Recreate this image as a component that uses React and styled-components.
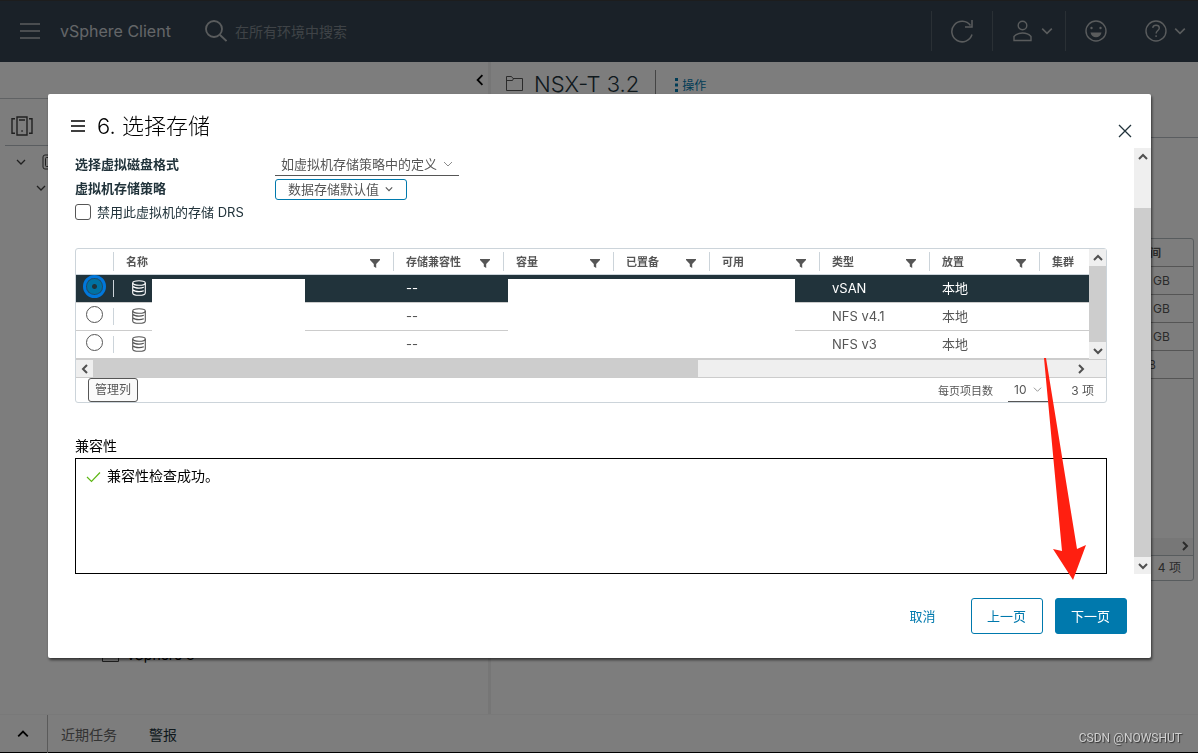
import React, { useState } from "react";
import styled, { createGlobalStyle } from "styled-components";

const sans = `Inter, "Noto Sans CJK SC", sans-serif`;

const GlobalStyle = createGlobalStyle`
  *, *::before, *::after {
    box-sizing: border-box;
  }

  body {
    margin: 0;
    font-family: ${sans};
    font-size: 13px;
    color: #565656;
    background: #fafafa;
  }

  button, input, select {
    margin: 0;
    font-family: inherit;
    color: inherit;
  }
`;

/* ---------- icons ---------- */

const Icon = styled.svg`
  flex: none;
  display: block;
  fill: none;
  stroke: currentColor;
  stroke-width: ${({ $stroke }) => $stroke || 1};
`;

const Chevron = ({ size = 10, stroke = 1.2, dir = "down" }) => {
  const turn = { down: 0, left: 90, up: 180, right: 270 }[dir];
  return (
    <Icon width={size} height={size} viewBox="0 0 10 10" $stroke={stroke}>
      <path d="M1 3l4 4 4-4" transform={`rotate(${turn} 5 5)`} />
    </Icon>
  );
};

const MenuIcon = ({ width, height, stroke }) => (
  <Icon width={width} height={height} viewBox={`0 0 ${width} ${height}`} $stroke={stroke}>
    <path d={`M0 1h${width}M0 ${height / 2}h${width}M0 ${height - 1}h${width}`} />
  </Icon>
);

const FolderIcon = () => (
  <Icon width="17" height="15" viewBox="0 0 17 15">
    <path d="M.5 14.5V.5h5l1.500 2h9.500v12zM.5 4.500h6l1-2" />
  </Icon>
);

const DatabaseIcon = () => (
  <Icon width="14" height="16" viewBox="0 0 14 16" $stroke={1.1}>
    <ellipse cx="7" cy="3" rx="6.300" ry="2.300" />
    <path d="M.7 3v10c0 1.300 2.800 2.300 6.300 2.300s6.300-1 6.300-2.300V3M1 6.500c1 1 3.200 1.600 6 1.600 1.900 0 3.600-.3 4.800-.8M1 10c1 1 3.200 1.600 6 1.600 1.900 0 3.600-.3 4.800-.8" />
  </Icon>
);

const FilterIcon = () => (
  <Icon width="10" height="9" viewBox="0 0 10 9">
    <path d="M0 0h10v1L6.200 5v4L3.800 7.600V5L0 1z" fill="currentColor" stroke="none" />
  </Icon>
);

/* ---------- application behind the dialog ---------- */

const Page = styled.div`
  display: flex;
  flex-direction: column;
  height: 100vh;
  overflow: hidden;
`;

const TopBar = styled.header`
  display: flex;
  align-items: center;
  height: 62px;
  padding-left: 20px;
  color: #b4b8bb;
  background: #344350;
  box-shadow: inset 0 1px #3a3a3a;
`;

const PlainButton = styled.button`
  display: flex;
  align-items: center;
  justify-content: center;
  gap: ${({ $gap }) => $gap || 0}px;
  padding: 0;
  border: 0;
  background: none;
  cursor: pointer;
`;

const Brand = styled.span`
  margin: 0 34px 0 20px;
  font-size: 16px;
  line-height: 24px;
  color: #c8ccd0;
`;

const Search = styled.label`
  display: flex;
  flex: 1;
  align-items: center;
  gap: 8px;
`;

const SearchInput = styled.input`
  flex: 1;
  border: 0;
  outline: 0;
  padding: 0;
  font-size: 14px;
  background: none;

  &::placeholder {
    color: #7f878e;
    opacity: 1;
  }
`;

const BarItem = styled.div`
  display: flex;
  justify-content: center;
  align-items: center;
  width: ${({ $width }) => $width}px;
  height: 40px;
  padding-left: ${({ $inset }) => $inset || 0}px;
  border-left: 1px solid ${({ $line }) => ($line ? "#54606b" : "transparent")};
`;

const Workspace = styled.div`
  display: flex;
  flex: 1;
  min-height: 0;
`;

const Navigator = styled.aside`
  display: flex;
  flex-direction: column;
  width: 488px;
  color: #404040;
`;

const NavTop = styled.div`
  display: flex;
  justify-content: flex-end;
  align-items: center;
  height: 37px;
  padding-right: 2px;
  border-bottom: 1px solid #c0c4c8;
  color: #000;
`;

const NavTabs = styled.div`
  display: flex;
  align-items: center;
  height: 47px;
  margin-left: 5px;
  padding: 8px 6px 0;
  border-bottom: 1px solid #b4bac0;
`;

const TreeRow = styled.div`
  display: flex;
  align-items: center;
  height: 26px;
  margin-top: ${({ $last }) => ($last ? "auto" : 0)};
  margin-bottom: ${({ $last }) => ($last ? 50 : 0)}px;
  padding: 6px 0 0 ${({ $indent }) => $indent}px;
  font-size: 14px;
`;

const TreeToggle = styled.span`
  width: 26px;
`;

const TreeLabel = styled.span`
  padding-left: 8px;
  color: #000;
`;

const Splitter = styled.div`
  width: 3px;
  background: #ececec;
`;

const Main = styled.main`
  flex: 1;
  min-width: 0;
`;

const ObjectHeader = styled.div`
  display: flex;
  align-items: center;
  height: 76px;
  padding: 0 0 32px 15px;
  border-bottom: 1px solid #b4bac0;
`;

const ObjectTitle = styled.h1`
  margin: 0 16px 0 11px;
  font-size: 22px;
  font-weight: 300;
  line-height: 28px;
  color: #21333b;
`;

const Actions = styled.button`
  display: flex;
  align-items: center;
  gap: 4px;
  height: 28px;
  padding: 2px 0 0 19px;
  border: 0;
  border-left: 1px solid #888;
  font-size: 12px;
  color: #0079ad;
  background: none;
`;

const BackGrid = styled.div`
  margin: 100px 4px 0 24px;
  border: 1px solid #b0b8bc;
  border-radius: 3px;
`;

const BackTable = styled.table`
  width: 100%;
  border-collapse: collapse;

  th,
  td {
    height: 28px;
    padding: 0;
    border-bottom: 1px solid #aaa;
    text-align: left;
    font-size: 12px;
  }

  th {
    height: 27px;
    font-size: 11px;
  }
`;

const EdgeCell = styled.td`
  width: 54px;
`;

const EdgeText = styled.span`
  padding-left: ${({ $shift }) => ($shift ? 0 : 14)}px;
`;

const BackScroll = styled.div`
  display: flex;
  justify-content: flex-end;
  align-items: center;
  height: 18px;
  margin-top: 159px;
  padding-right: 3px;
  border-bottom: 1px solid #b0b8bc;
  background: #efefef;
`;

const BackFooter = styled.div`
  height: 24px;
  padding-right: 12px;
  font-size: 12px;
  line-height: 24px;
  text-align: right;
`;

const TaskBar = styled.footer`
  display: flex;
  align-items: center;
  height: 39px;
  border-top: 1px solid #f2f2f2;
  border-bottom: 1px solid #000;
  font-size: 14px;
`;

const TaskToggle = styled(PlainButton)`
  width: 48px;
  height: 38px;
  padding-right: 2px;
  border-right: 1px solid #b4b4b4;
  color: #000;
`;

const TaskTab = styled(PlainButton)`
  margin-left: ${({ $active }) => ($active ? 13 : 32)}px;
  font-size: 14px;
  color: ${({ $active }) => ($active ? "#666" : "#21333b")};
`;

const Watermark = styled.span`
  position: fixed;
  right: 16px;
  bottom: 7px;
  font-family: Roboto, "Liberation Sans", sans-serif;
  font-size: 12px;
  line-height: 16px;
  color: #d0d0d0;
  text-shadow: 1px 1px 1px #333;
`;

/* ---------- dialog ---------- */

const Backdrop = styled.div`
  position: fixed;
  inset: 0;
  display: flex;
  padding: 94px 47px 95px 48px;
  background: rgba(0, 0, 0, 0.5);
`;

const Dialog = styled.section`
  position: relative;
  display: flex;
  flex: 1;
  flex-direction: column;
  min-width: 0;
  border-radius: 2px;
  background: #fff;
  box-shadow: 1px 2px 3px rgba(0, 0, 0, 0.6);
`;

const DialogHeader = styled.header`
  display: flex;
  align-items: center;
  gap: 12px;
  height: 54px;
  padding: 10px 19px 0 23px;
  color: #000;
`;

const DialogTitle = styled.h2`
  flex: 1;
  margin: 0;
  font-size: 22px;
  font-weight: 300;
  line-height: 30px;
`;

const CloseButton = styled(PlainButton)`
  padding-top: 10px;
  color: #21333b;
`;

const DialogBody = styled.div`
  display: flex;
  flex: 1;
  min-height: 0;
`;

const Content = styled.div`
  display: flex;
  flex: 1;
  flex-direction: column;
  min-width: 0;
  padding: 4px 27px 0;
`;

const FormRow = styled.div`
  display: flex;
  align-items: center;
  height: 24px;
  color: #21333b;

  label {
    padding-bottom: 2px;
  }
`;

const FormLabel = styled.label`
  width: 200px;
  font-weight: 700;
`;

const SelectBox = styled.span`
  display: grid;
  align-items: center;
  width: ${({ $width }) => $width}px;
  height: 24px;
  border-bottom: 1px solid #565656;
  color: #8c8c8c;

  > * {
    grid-area: 1 / 1;
  }

  > svg {
    justify-self: end;
    margin-right: 6px;
    pointer-events: none;
  }
`;

const Select = styled.select`
  width: 100%;
  height: 23px;
  padding: 0 16px 0 6px;
  border: 0;
  outline: 0;
  appearance: none;
  font-size: ${({ $small }) => ($small ? 12 : 13)}px;
  color: #565656;
  background: none;
`;

const PolicyButton = styled.button`
  display: flex;
  align-items: center;
  justify-content: space-between;
  width: 132px;
  height: 21px;
  margin-top: 3px;
  padding: 0 13px 2px 12px;
  border: 1px solid #0079ad;
  border-radius: 3px;
  font-size: 13px;
  line-height: 18px;
  color: #565656;
  background: #fff;
`;

const Checkbox = styled.input`
  width: 16px;
  height: 16px;
  margin-right: 6px;
  border: 1px solid #565656;
  border-radius: 3px;
  appearance: none;
  background: #fff;
`;

const DataGrid = styled.div`
  margin-top: 24px;
  border: 1px solid #ccd4da;
  border-radius: 3px;
`;

const GridView = styled.div`
  position: relative;
  display: flex;
`;

const Table = styled.table`
  flex: 1;
  width: 100%;
  table-layout: fixed;
  border-collapse: separate;
  border-spacing: 0;
`;

const HeadCell = styled.th`
  width: ${({ $width }) => ($width ? `${$width}px` : "auto")};
  height: 26px;
  padding: 0;
  border-bottom: 1px solid #ccd4da;
  font-size: 11px;
  font-weight: 700;
  line-height: 16px;
`;

const HeadInner = styled.div`
  display: flex;
  align-items: center;
  justify-content: space-between;
  height: 19px;
  padding: 0 13px 0 12px;
  border-left: 1px solid #ccd4da;
  white-space: nowrap;

  svg {
    margin-top: 3px;
  }
`;

const Row = styled.tr`
  color: ${({ $selected }) => ($selected ? "#fff" : "#565656")};
  background: ${({ $selected }) => ($selected ? "#21333b" : "#fff")};
`;

const Cell = styled.td`
  height: 28px;
  padding: 0 0 2px 13px;
  border-bottom: 1px solid #ccc;
  font-size: 13px;
  line-height: 20px;
`;

const RadioCell = styled(Cell)`
  padding: 3px 0 0 10px;
  vertical-align: top;
`;

const NameCell = styled(Cell)`
  padding: 0 0 1px;
`;

const NameInner = styled.div`
  display: flex;
  align-items: center;
  height: 17px;
  padding-left: 18px;
  border-left: 1px solid #ccd4da;
`;

const Radio = styled.input`
  display: block;
  width: 17px;
  height: 17px;
  border: 1px solid #565656;
  border-radius: 50%;
  appearance: none;
  background: #fff;

  &:checked {
    border-color: #21506c;
    background: radial-gradient(circle, #21333b 2px, #0072a3 3px);
    outline: 3px solid #0077db;
  }
`;

const Mask = styled.span`
  position: absolute;
  top: 30px;
  bottom: 1px;
  left: ${({ $left }) => $left}px;
  width: ${({ $width }) => $width}px;
  background: #fff;
`;

const ScrollTrack = styled.div`
  display: flex;
  flex-direction: ${({ $horizontal }) => ($horizontal ? "row" : "column")};
  ${({ $horizontal }) => ($horizontal ? "padding-right: 17px;" : "width: 17px;")}
  ${({ $horizontal }) => $horizontal && "border: solid #ccc; border-width: 1px 0;"}
  color: #505050;
  background: #efefef;
`;

const ScrollArrow = styled.span`
  display: flex;
  flex: none;
  align-items: center;
  justify-content: center;
  width: 17px;
  height: 17px;
`;

const ScrollSpace = styled.span`
  flex: ${({ $grow }) => $grow} 0 0;
`;

const ScrollThumb = styled(ScrollSpace)`
  background: #cdcdcd;
`;

const GridFooter = styled.div`
  display: flex;
  align-items: center;
  height: 24px;
  padding: 0 12px;
  font-size: 11px;
`;

const ColumnsButton = styled.button`
  height: 24px;
  margin-right: auto;
  padding: 0 6px;
  border: 1px solid #565656;
  border-radius: 3px;
  font-size: 12px;
  line-height: 22px;
  background: #fafafa;
`;

const PageSizeLabel = styled.label`
  margin-right: 15px;
`;

const ItemCount = styled.span`
  width: 46px;
  padding-bottom: 2px;
  font-size: 12px;
  text-align: right;
`;

const SectionTitle = styled.h3`
  margin: 33px 0 2px;
  font-size: 14px;
  font-weight: 400;
  line-height: 20px;
  color: #000;
`;

const ResultBox = styled.div`
  display: flex;
  flex: 1;
  align-items: flex-start;
  gap: 6px;
  padding: 7px 10px;
  border: 1px solid #000;
  font-size: 14px;
  line-height: 20px;
  color: #000;

  svg {
    margin-top: 5px;
    color: #5eb715;
  }
`;

const DialogFooter = styled.footer`
  display: flex;
  justify-content: flex-end;
  gap: 12px;
  padding: 24px 24px 24px 0;
`;

const Button = styled.button`
  width: 72px;
  height: 36px;
  padding: 0 1px 2px 0;
  border: 1px solid ${({ $kind }) => ($kind === "link" ? "transparent" : "#0079ad")};
  border-radius: 3px;
  font-size: 13px;
  color: ${({ $kind }) => ($kind === "primary" ? "#fff" : "#0079ad")};
  background: ${({ $kind }) => ($kind === "primary" ? "#0079ad" : "#fff")};
`;

const Pointer = styled.svg`
  position: absolute;
  right: 65px;
  bottom: 78px;
  pointer-events: none;
`;

const COLUMNS = [
  { title: "名称", filter: true },
  { title: "存储兼容性", width: 110, filter: true },
  { title: "容量", width: 110, filter: true },
  { title: "已置备", width: 96, filter: true },
  { title: "可用", width: 110, filter: true },
  { title: "类型", width: 110, filter: true },
  { title: "放置", width: 110, filter: true },
  { title: "集群", width: 50 },
];

const DATASTORES = [
  { type: "vSAN", placement: "本地" },
  { type: "NFS v4.1", placement: "本地" },
  { type: "NFS v3", placement: "本地" },
];

const Background = () => (
  <Page>
    <TopBar>
      <PlainButton aria-label="菜单">
        <MenuIcon width={20} height={16} stroke={1.4} />
      </PlainButton>
      <Brand>vSphere Client</Brand>
      <Search>
        <Icon width="22" height="22" viewBox="0 0 22 22" $stroke={1.8}>
          <circle cx="9" cy="9" r="8" />
          <path d="M15 15l6.500 6" />
        </Icon>
        <SearchInput aria-label="搜索" placeholder="在所有环境中搜索" />
      </Search>
      <BarItem $width={61} $line>
        <PlainButton aria-label="刷新">
          <Icon width="24" height="24" viewBox="0 0 24 24" $stroke={1.5}>
            <path d="M22 15.500A10.300 10.300 0 1 1 20.500 6.500M22 1v7h-7" />
          </Icon>
        </PlainButton>
      </BarItem>
      <BarItem $width={73} $inset={8} $line>
        <PlainButton aria-label="用户" $gap={9}>
          <Icon width="19" height="22" viewBox="0 0 19 22" $stroke={1.4}>
            <circle cx="9.500" cy="5.500" r="4.300" />
            <path d="M1 20.500v-4c2-2.300 5-3.500 8.500-3.500s6.500 1.200 8.500 3.500v4z" />
          </Icon>
          <Chevron size={12} stroke={1.3} />
        </PlainButton>
      </BarItem>
      <BarItem $width={61} $line>
        <PlainButton aria-label="反馈">
          <Icon width="22" height="22" viewBox="0 0 22 22" $stroke={1.4}>
            <circle cx="11" cy="11" r="10" />
            <circle cx="6.500" cy="8" r="1.200" fill="currentColor" stroke="none" />
            <circle cx="15.500" cy="8" r="1.200" fill="currentColor" stroke="none" />
            <path d="M5.500 12.500h11c-.5 3-2.800 4.800-5.500 4.800s-5-1.800-5.500-4.800z" fill="currentColor" stroke="none" />
          </Icon>
        </PlainButton>
      </BarItem>
      <BarItem $width={72} $inset={6}>
        <PlainButton aria-label="帮助" $gap={7}>
          <Icon width="22" height="22" viewBox="0 0 22 22" $stroke={1.4}>
            <circle cx="11" cy="11" r="10" />
            <path d="M7.700 7.800c.3-1.600 1.600-2.500 3.300-2.500 1.900 0 3.300 1 3.300 2.700 0 2.500-3.200 2.600-3.200 5.500M11.100 15.200v1.800" />
          </Icon>
          <Chevron size={12} stroke={1.3} />
        </PlainButton>
      </BarItem>
    </TopBar>
    <Workspace>
      <Navigator>
        <NavTop>
          <Chevron size={12} stroke={1.5} dir="left" />
        </NavTop>
        <NavTabs>
          <Icon width="22" height="20" viewBox="0 0 22 20" $stroke={1.4}>
            <path d="M4 2.700H1v14.600h3M18 2.700h3v14.600h-3M6 1h10v18H6z" />
            <path d="M8 4h6M10.300 15h1.500" />
          </Icon>
        </NavTabs>
        <TreeRow $indent={16}>
          <TreeToggle>
            <Chevron stroke={1.3} />
          </TreeToggle>
          <Icon width="14" height="16" viewBox="0 0 14 16">
            <rect x="1" y="1" width="12" height="14" rx="2" />
            <rect x="3.500" y="3.500" width="9" height="9" rx="1" />
          </Icon>
        </TreeRow>
        <TreeRow $indent={36}>
          <TreeToggle>
            <Chevron stroke={1.3} />
          </TreeToggle>
        </TreeRow>
        <TreeRow $indent={76} $last>
          <TreeToggle>
            <Chevron dir="right" />
          </TreeToggle>
          <FolderIcon />
          <TreeLabel>vSphere 8</TreeLabel>
        </TreeRow>
      </Navigator>
      <Splitter />
      <Main>
        <ObjectHeader>
          <FolderIcon />
          <ObjectTitle>NSX-T 3.2</ObjectTitle>
          <Actions>
            <Icon width="3" height="14" viewBox="0 0 3 14">
              <path d="M0 0h3v3H0zM0 5.500h3v3H0zM0 11h3v3H0z" fill="currentColor" stroke="none" />
            </Icon>
            操作
          </Actions>
        </ObjectHeader>
        <BackGrid>
          <BackTable>
            <thead>
              <tr>
                <th />
                <th>空间</th>
              </tr>
            </thead>
            <tbody>
              {[0, 1, 2, 3].map((n) => (
                <tr key={n}>
                  <td />
                  <EdgeCell>
                    <EdgeText $shift={n === 3}>GB</EdgeText>
                  </EdgeCell>
                </tr>
              ))}
            </tbody>
          </BackTable>
          <BackScroll>
            <Chevron stroke={2} dir="right" />
          </BackScroll>
          <BackFooter>4 项</BackFooter>
        </BackGrid>
      </Main>
    </Workspace>
    <TaskBar>
      <TaskToggle aria-label="展开">
        <Chevron size={12} stroke={1.5} dir="up" />
      </TaskToggle>
      <TaskTab $active>近期任务</TaskTab>
      <TaskTab>警报</TaskTab>
    </TaskBar>
  </Page>
);

const DatastoreGrid = () => {
  const [selected, setSelected] = useState(0);

  return (
    <DataGrid>
      <GridView>
        <Table>
          <thead>
            <tr>
              <HeadCell $width={37} />
              {COLUMNS.map(({ title, width, filter }) => (
                <HeadCell key={title} $width={width}>
                  <HeadInner>
                    {title}
                    {filter && <FilterIcon />}
                  </HeadInner>
                </HeadCell>
              ))}
            </tr>
          </thead>
          <tbody>
            {DATASTORES.map(({ type, placement }, i) => (
              <Row key={type} $selected={i === selected}>
                <RadioCell>
                  <Radio
                    type="radio"
                    name="datastore"
                    aria-label={type}
                    checked={i === selected}
                    onChange={() => setSelected(i)}
                  />
                </RadioCell>
                <NameCell>
                  <NameInner>
                    <DatabaseIcon />
                  </NameInner>
                </NameCell>
                <Cell>--</Cell>
                <Cell />
                <Cell />
                <Cell />
                <Cell>{type}</Cell>
                <Cell>{placement}</Cell>
                <Cell />
              </Row>
            ))}
          </tbody>
        </Table>
        <ScrollTrack>
          <ScrollArrow>
            <Chevron stroke={2} dir="up" />
          </ScrollArrow>
          <ScrollThumb $grow={1} />
          <ScrollArrow>
            <Chevron stroke={2} />
          </ScrollArrow>
        </ScrollTrack>
        <Mask $left={76} $width={153} />
        <Mask $left={432} $width={287} />
      </GridView>
      <ScrollTrack $horizontal>
        <ScrollArrow>
          <Chevron stroke={2} dir="left" />
        </ScrollArrow>
        <ScrollThumb $grow={605} />
        <ScrollSpace $grow={374} />
        <ScrollArrow>
          <Chevron stroke={2} dir="right" />
        </ScrollArrow>
      </ScrollTrack>
      <GridFooter>
        <ColumnsButton>管理列</ColumnsButton>
        <PageSizeLabel htmlFor="page-size">每页项目数</PageSizeLabel>
        <SelectBox $width={40}>
          <Select id="page-size" $small>
            <option>10</option>
          </Select>
          <Chevron size={9} stroke={1} />
        </SelectBox>
        <ItemCount>3 项</ItemCount>
      </GridFooter>
    </DataGrid>
  );
};

const App = () => (
  <>
    <GlobalStyle />
    <Background />
    <Backdrop>
      <Dialog role="dialog" aria-labelledby="step-title">
        <DialogHeader>
          <MenuIcon width={14} height={12} stroke={1.3} />
          <DialogTitle id="step-title">6. 选择存储</DialogTitle>
          <CloseButton aria-label="关闭">
            <Icon width="14" height="14" viewBox="0 0 14 14" $stroke={1.3}>
              <path d="M1 1l12 12M13 1L1 13" />
            </Icon>
          </CloseButton>
        </DialogHeader>
        <DialogBody>
          <Content>
            <FormRow>
              <FormLabel htmlFor="disk-format">选择虚拟磁盘格式</FormLabel>
              <SelectBox $width={184}>
                <Select id="disk-format">
                  <option>如虚拟机存储策略中的定义</option>
                </Select>
                <Chevron stroke={1} />
              </SelectBox>
            </FormRow>
            <FormRow>
              <FormLabel htmlFor="policy">虚拟机存储策略</FormLabel>
              <PolicyButton id="policy">
                数据存储默认值
                <Chevron size={8} stroke={1.4} />
              </PolicyButton>
            </FormRow>
            <FormRow>
              <Checkbox type="checkbox" id="disable-drs" />
              <label htmlFor="disable-drs">禁用此虚拟机的存储 DRS</label>
            </FormRow>
            <DatastoreGrid />
            <SectionTitle>兼容性</SectionTitle>
            <ResultBox>
              <Icon width="15" height="12" viewBox="0 0 15 12" $stroke={1.2}>
                <path d="M1 6l4.500 4.500L14 1.500" />
              </Icon>
              兼容性检查成功。
            </ResultBox>
          </Content>
          <ScrollTrack>
            <ScrollArrow>
              <Chevron stroke={2} dir="up" />
            </ScrollArrow>
            <ScrollSpace $grow={11} />
            <ScrollThumb $grow={89} />
            <ScrollArrow>
              <Chevron stroke={2} />
            </ScrollArrow>
          </ScrollTrack>
        </DialogBody>
        <DialogFooter>
          <Button $kind="link">取消</Button>
          <Button>上一页</Button>
          <Button $kind="primary">下一页</Button>
        </DialogFooter>
        <Pointer width="42" height="222" viewBox="0 0 42 222">
          <path d="M0 0h2l31 191 9-4-13 35L9 191l9 2z" fill="#ff1f10" />
        </Pointer>
      </Dialog>
    </Backdrop>
    <Watermark>CSDN @NOWSHUT</Watermark>
  </>
);

export default App;
